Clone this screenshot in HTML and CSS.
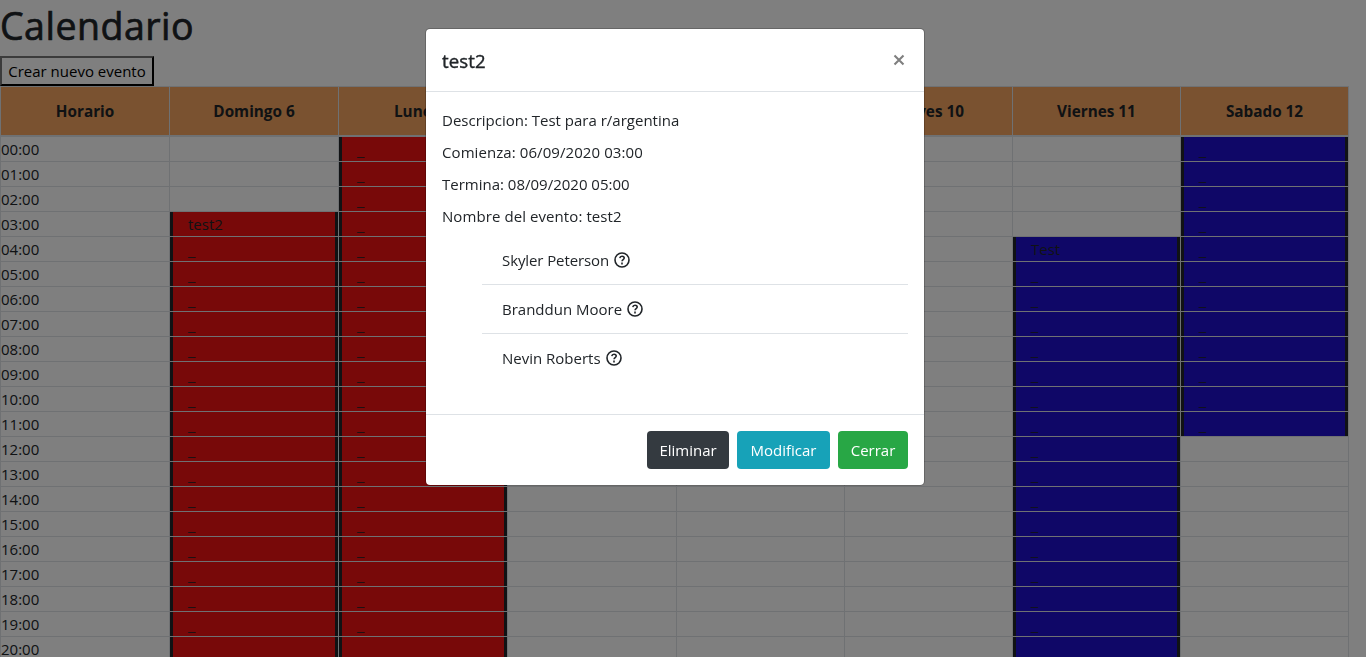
FILE: index.html
```
<!DOCTYPE html>
<html lang="es">
<head>
<meta charset="utf-8">
<title>Calendario</title>
<link rel="stylesheet" href="styles.css">
</head>
<body>
<h1 class="title">Calendario</h1>
<button class="create">Crear nuevo evento</button>
<div class="calendar" id="calendar"></div>
<div class="backdrop">
  <section class="modal">
    <header class="modal-header">
      <h5 class="modal-title">test2</h5>
      <svg class="close" viewBox="0 0 12 12"><path d="M1.5 1.5 10.5 10.5M10.5 1.5 1.5 10.5"/></svg>
    </header>
    <div class="modal-body">
      <p>Descripcion: Test para r/argentina</p>
      <p class="wide">Comienza: 06/09/2020 03:00</p>
      <p>Termina: 08/09/2020 05:00</p>
      <p class="wide">Nombre del evento: test2</p>
      <ul class="guests">
        <li><span class="narrow">Skyler Peterson</span><svg class="help" viewBox="0 0 16 16"><circle cx="8" cy="8" r="7"/><path d="M5.8 6.2C6 4.8 6.9 4.3 8 4.3c1.3 0 2.2.8 2.2 1.8 0 1.5-2.1 1.5-2.1 3.1"/><path d="M8 10.6v1.9"/></svg></li>
        <li><span>Branddun Moore</span><svg class="help" viewBox="0 0 16 16"><circle cx="8" cy="8" r="7"/><path d="M5.8 6.2C6 4.8 6.9 4.3 8 4.3c1.3 0 2.2.8 2.2 1.8 0 1.5-2.1 1.5-2.1 3.1"/><path d="M8 10.6v1.9"/></svg></li>
        <li><span>Nevin Roberts</span><svg class="help" viewBox="0 0 16 16"><circle cx="8" cy="8" r="7"/><path d="M5.8 6.2C6 4.8 6.9 4.3 8 4.3c1.3 0 2.2.8 2.2 1.8 0 1.5-2.1 1.5-2.1 3.1"/><path d="M8 10.6v1.9"/></svg></li>
      </ul>
    </div>
    <footer class="modal-footer">
      <button class="btn dark">Eliminar</button>
      <button class="btn info">Modificar</button>
      <button class="btn success">Cerrar</button>
    </footer>
  </section>
</div>
<script src="calendar.js"></script>
</body>
</html>
```
FILE: calendar.js
```
const days = ["Horario", "Domingo 6", "Lunes 7", "", "", "Jueves 10", "Viernes 11", "Sabado 12"];
const events = [
  { day: 1, from: 3, to: 24, color: "red", name: "test2" },
  { day: 2, from: 0, to: 24, color: "red" },
  { day: 6, from: 4, to: 24, color: "blue", name: "Test" },
  { day: 7, from: 0, to: 12, color: "blue" }
];
const calendar = document.getElementById("calendar");
function add(className, text) {
  const cell = document.createElement("div");
  cell.className = className;
  cell.textContent = text;
  calendar.append(cell);
}
days.forEach(day => add("head", day));
for (let hour = 0; hour < 21; hour++) {
  add("hour", String(hour).padStart(2, "0") + ":00");
  for (let day = 1; day < 8; day++) {
    const event = events.find(e => e.day === day && hour >= e.from && hour < e.to);
    if (!event) add("cell", "");
    else if (hour === event.from && event.name) add("cell event " + event.color, event.name);
    else add("cell event continued " + event.color, "_");
  }
}
```
FILE: styles.css
```
* { box-sizing: border-box; }
html, body { height: 100%; }
body {
  margin: 0;
  overflow: hidden;
  background: #fff;
  color: #212529;
  font: 15px/24px "Open Sans", "Noto Sans", sans-serif;
}
.title { margin: 0 0 8px; padding-top: 2px; height: 48px; font-size: 37.5px; line-height: 48px; font-weight: 500; letter-spacing: .5px; -webkit-text-stroke: .7px #212529; }
.create {
  display: block;
  width: 154px;
  height: 30px;
  padding: 0;
  border: 2px outset #767676;
  border-color: #767676 #212121 #212121 #767676;
  background: #fff;
  color: #000;
  font: inherit;
  line-height: 26px;
  white-space: nowrap;
}
.calendar {
  display: grid;
  grid-template-columns: 169px 169px 169px 169px 168px 168px 168px 168px;
  grid-template-rows: 50px;
  grid-auto-rows: 25px;
  width: 1349px;
  border-left: 1px solid #dee2e6;
  border-top: 1px solid #dee2e6;
}
.head, .hour, .cell { border-right: 1px solid #dee2e6; border-bottom: 1px solid #dee2e6; }
.head { border-bottom-width: 2px; background: #f4a460; background-clip: padding-box; font-size: 15.3px; font-weight: 700; line-height: 49px; text-align: center; }
.hour, .cell { line-height: 24px; }
.event { position: relative; padding-left: 18px; background-clip: padding-box; }
.event::before, .event::after { content: ""; position: absolute; top: 0; bottom: 0; width: 3px; background: #212529; }
.event::before { left: 0; }
.event::after { right: 0; }
.continued { font-family: "Liberation Sans", sans-serif; font-size: 13px; line-height: 27px; height: 25px; }
.red { background-color: #f01212; }
.blue { background-color: #1f0fcf; }
.backdrop {
  position: fixed;
  inset: 0;
  display: flex;
  align-items: flex-start;
  justify-content: center;
  padding: 28px 16px 0 0;
  background: rgba(0, 0, 0, .5);
}
.modal {
  width: 500px;
  height: 458px;
  display: flex;
  flex-direction: column;
  border: 1px solid rgba(0, 0, 0, .2);
  border-radius: 5px;
  background: #fff;
  background-clip: padding-box;
}
.modal-header { display: flex; justify-content: space-between; height: 63px; padding: 16px; border-bottom: 1px solid #dee2e6; }
.modal-title { margin: 0; font-size: 18.6px; line-height: 32px; font-weight: 500; letter-spacing: .1px; -webkit-text-stroke: .4px #212529; }
.close { width: 12px; height: 12px; margin: 9px 3px 0 0; fill: none; stroke: #7f7f7f; stroke-width: 2.1; }
.modal-body { flex: 1; padding: 16px; }
.modal-body p { margin: 0 0 8px; }
.wide { letter-spacing: .08px; }
.narrow { letter-spacing: -.1px; }
.guests { margin: 0; padding: 0 0 0 40px; list-style: none; }
.guests li { display: flex; align-items: center; gap: 5px; height: 49px; padding-left: 20px; border-bottom: 1px solid #dee2e6; }
.guests li:last-child { height: 48px; border-bottom: 0; }
.help { width: 16px; height: 16px; fill: none; stroke: #212529; stroke-width: 1.6; }
.modal-footer { display: flex; justify-content: flex-end; gap: 8px; height: 71px; padding: 16px; border-top: 1px solid #dee2e6; }
.btn { height: 38px; padding: 0; border: 0; border-radius: 4px; color: #fff; font: inherit; }
.dark { width: 82px; background: #343a40; }
.info { width: 93px; background: #17a2b8; }
.success { width: 70px; background: #28a745; }
```
